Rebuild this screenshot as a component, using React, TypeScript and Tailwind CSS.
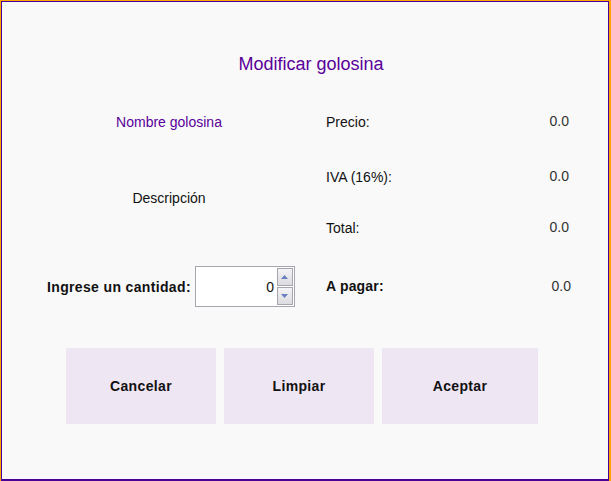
export default function App() {
  return (
    <div className="h-[481px] w-[611px] bg-[#ffa500] pl-px pr-[2px] pt-px font-['Liberation_Sans',Arial,sans-serif]">
      <div className="flex h-full flex-col border border-b-2 border-[#4b0096] bg-[#f9f9f9]">
        <h1 className="mt-[52px] pl-[12px] text-center text-[18px] leading-[20px] text-[#5a0099]">
          Modificar golosina
        </h1>

        <div className="mt-[38px] flex gap-[31px] pl-[45px]">
          {/* left column */}
          <div className="flex w-[248px] flex-col">
            <p className="pr-[4px] text-center text-[14px] leading-[20px] text-[#5a0099]">
              Nombre golosina
            </p>
            <p className="mt-[56px] pr-[4px] text-center text-[14px] leading-[20px] text-[#111]">
              Descripción
            </p>
            <div className="mt-[58px] flex items-center gap-[4px]">
              <span className="text-[14px] font-bold leading-[20px] tracking-[0.35px] text-[#111]">
                Ingrese un cantidad:
              </span>
              <div className="flex h-[41px] w-[100px] items-center border border-[#a6a6ae] bg-white">
                <span className="flex-1 pr-[3px] text-right text-[14px] leading-[20px] text-[#111]">0</span>
                <div className="mr-[1px] flex flex-col gap-[1px]">
                  <button className="flex h-[18px] w-[16px] items-center justify-center border border-[#a6a6ae] bg-gradient-to-b from-[#f4f4f6] to-[#dcdce0]">
                    <svg width="7" height="4" viewBox="0 0 7 4">
                      <path d="M0 4 L3.5 0 L7 4Z" fill="#6a7fc0" />
                    </svg>
                  </button>
                  <button className="flex h-[18px] w-[16px] items-center justify-center border border-[#a6a6ae] bg-gradient-to-b from-[#f4f4f6] to-[#dcdce0]">
                    <svg width="7" height="4" viewBox="0 0 7 4">
                      <path d="M0 0 L3.5 4 L7 0Z" fill="#6a7fc0" />
                    </svg>
                  </button>
                </div>
              </div>
            </div>
          </div>

          {/* right column */}
          <div className="flex w-[245px] flex-col text-[14px] leading-[20px]">
            <div className="flex justify-between pr-[2px]">
              <span className="text-[#111]">Precio:</span>
              <span className="-mt-px text-[#333]">0.0</span>
            </div>
            <div className="mt-[35px] flex justify-between pr-[2px]">
              <span className="text-[#111]">IVA (16%):</span>
              <span className="-mt-px text-[#333]">0.0</span>
            </div>
            <div className="mt-[31px] flex justify-between pr-[2px]">
              <span className="text-[#111]">Total:</span>
              <span className="-mt-px text-[#333]">0.0</span>
            </div>
            <div className="mt-[38px] flex justify-between">
              <span className="font-bold tracking-[0.2px] text-[#111]">A pagar:</span>
              <span className="text-[#333]">0.0</span>
            </div>
          </div>
        </div>

        <div className="mt-[41px] flex gap-[8px] pl-[64px] text-[14px] font-bold tracking-[0.35px] text-[#111]">
          <button className="h-[76px] w-[150px] bg-[#efe6f3]">Cancelar</button>
          <button className="h-[76px] w-[150px] bg-[#efe6f3]">Limpiar</button>
          <button className="h-[76px] w-[156px] bg-[#efe6f3]">Aceptar</button>
        </div>
      </div>
    </div>
  );
}
